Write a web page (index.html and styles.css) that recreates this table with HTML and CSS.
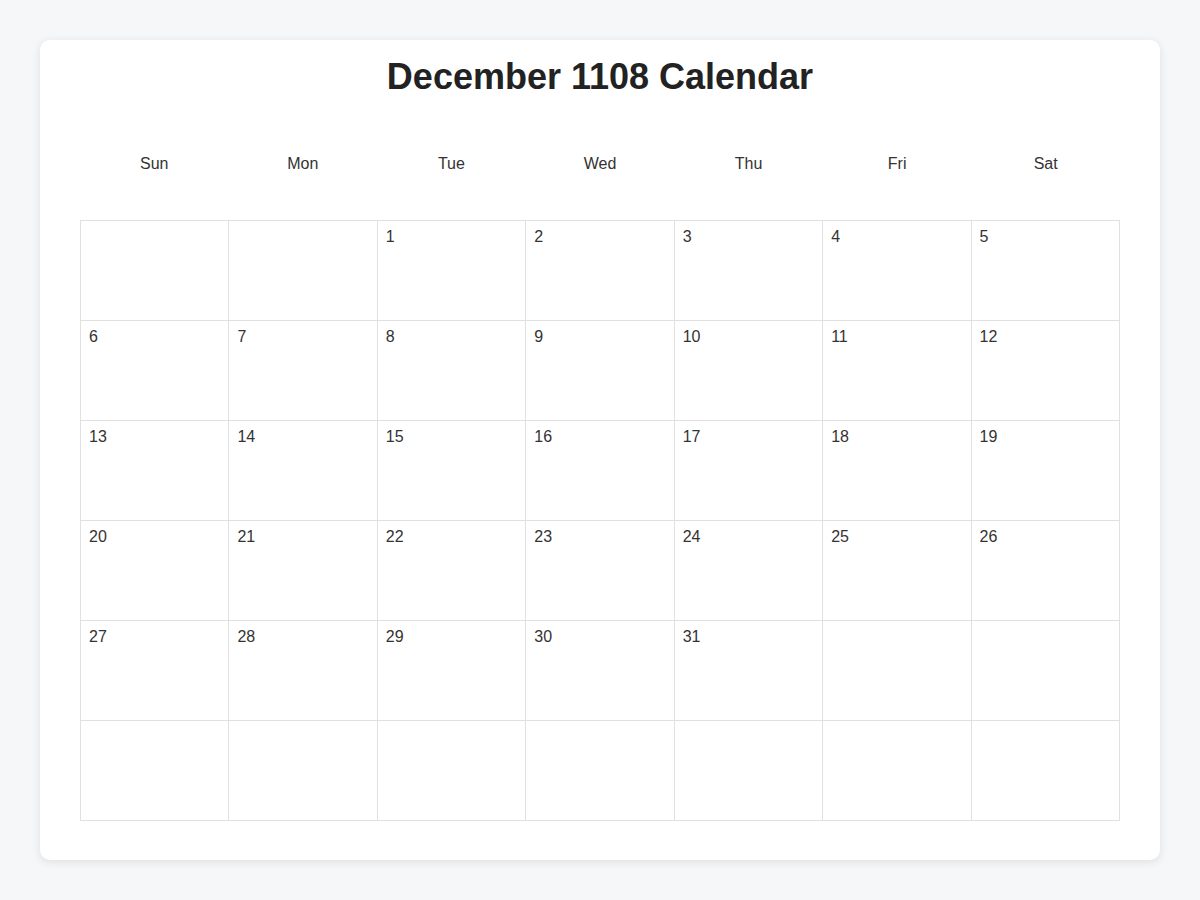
FILE: index.html
```html
<!DOCTYPE html>
<html>
<head>
<meta charset="utf-8">
<link rel="stylesheet" href="styles.css">
</head>
<body>
<div class="card">
  <h1 class="title">December 1108 Calendar</h1>
  <div class="weekdays">
    <div>Sun</div><div>Mon</div><div>Tue</div><div>Wed</div><div>Thu</div><div>Fri</div><div>Sat</div>
  </div>
  <div class="grid">
    <div class="cell"></div><div class="cell"></div><div class="cell">1</div><div class="cell">2</div><div class="cell">3</div><div class="cell">4</div><div class="cell">5</div>
    <div class="cell">6</div><div class="cell">7</div><div class="cell">8</div><div class="cell">9</div><div class="cell">10</div><div class="cell">11</div><div class="cell">12</div>
    <div class="cell">13</div><div class="cell">14</div><div class="cell">15</div><div class="cell">16</div><div class="cell">17</div><div class="cell">18</div><div class="cell">19</div>
    <div class="cell">20</div><div class="cell">21</div><div class="cell">22</div><div class="cell">23</div><div class="cell">24</div><div class="cell">25</div><div class="cell">26</div>
    <div class="cell">27</div><div class="cell">28</div><div class="cell">29</div><div class="cell">30</div><div class="cell">31</div><div class="cell"></div><div class="cell"></div>
    <div class="cell"></div><div class="cell"></div><div class="cell"></div><div class="cell"></div><div class="cell"></div><div class="cell"></div><div class="cell"></div>
  </div>
</div>
</body>
</html>
```
FILE: styles.css
```css
html, body {
  margin: 0;
  padding: 0;
}
body {
  background: #f6f7f9;
  font-family: "Liberation Sans", Arial, sans-serif;
  color: #333;
  padding: 40px;
}
.card {
  width: 1120px;
  height: 820px;
  box-sizing: border-box;
  background: #fff;
  border-radius: 10px;
  box-shadow: 0 2px 10px rgba(0, 0, 0, 0.1);
  padding: 13px 40px 40px;
}
.title {
  margin: 0;
  font-size: 36px;
  line-height: 48px;
  text-align: center;
  color: #222;
  font-weight: bold;
}
.weekdays {
  display: grid;
  grid-template-columns: repeat(7, 1fr);
  margin-top: 43px;
  margin-bottom: 36px;
}
.weekdays div {
  text-align: center;
  font-size: 16px;
  line-height: 40px;
  color: #333;
}
.grid {
  display: grid;
  grid-template-columns: repeat(7, 1fr);
  grid-auto-rows: 100px;
  border-top: 1px solid #e0e0e0;
  border-left: 1px solid #e0e0e0;
}
.cell {
  border-right: 1px solid #e0e0e0;
  border-bottom: 1px solid #e0e0e0;
  padding: 7px 8px;
  font-size: 16px;
  line-height: 18px;
  color: #333;
}
```
